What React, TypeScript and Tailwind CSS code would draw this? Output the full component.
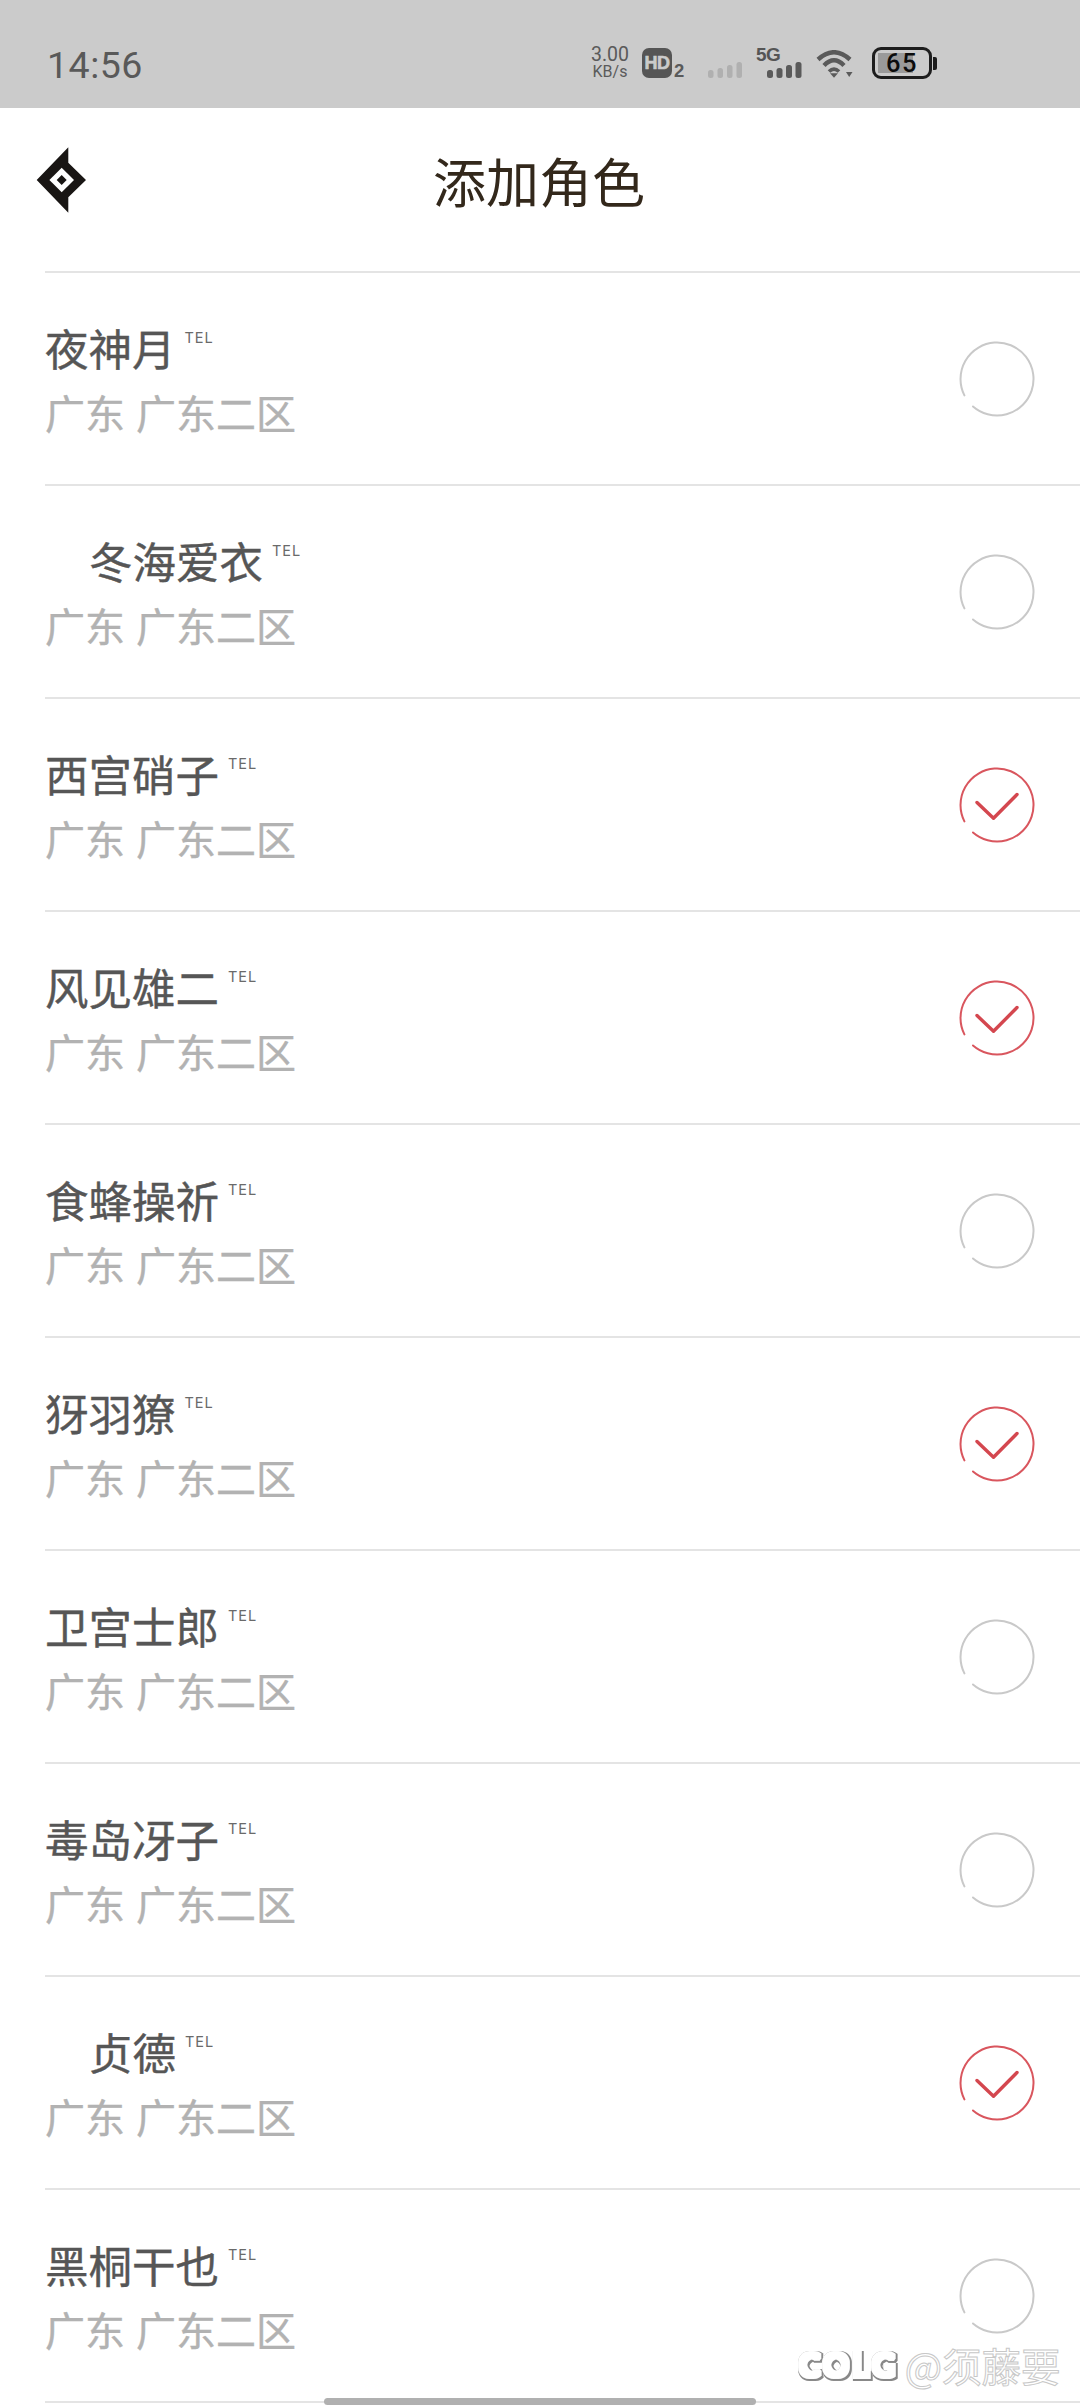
const rows = [
  { name: "夜神月", checked: false, indent: false },
  { name: "冬海爱衣", checked: false, indent: true },
  { name: "西宫硝子", checked: true, indent: false },
  { name: "风见雄二", checked: true, indent: false },
  { name: "食蜂操祈", checked: false, indent: false },
  { name: "犽羽獠", checked: true, indent: false },
  { name: "卫宫士郎", checked: false, indent: false },
  { name: "毒岛冴子", checked: false, indent: false },
  { name: "贞德", checked: true, indent: true },
  { name: "黑桐干也", checked: false, indent: false },
];

const cjk = "font-['Noto_Sans_CJK_SC','Noto_Sans',sans-serif]";

function Circle({ checked }: { checked: boolean }) {
  const c = checked ? "#d9565e" : "#c9c9c9";
  return (
    <svg width="80" height="80" viewBox="-40 -40 80 80" fill="none" className="shrink-0">
      <path d="M-32.6 16.4A36.5 36.5 0 1 1 -24 27.5" stroke={c} strokeWidth="2" strokeLinecap="round" />
      {checked && (
        <path d="M-20 -2.5L-3.5 13.3L20 -10.5" stroke="#d4474f" strokeWidth="3.4" strokeLinecap="round" strokeLinejoin="round" />
      )}
    </svg>
  );
}

function Row({ name, checked, indent }: { name: string; checked: boolean; indent: boolean }) {
  return (
    <div className="h-[213px] ml-[45px] border-b-2 border-[#e4e4e4] flex items-center justify-between pr-[43px] box-border">
      <div className="flex flex-col pb-[1px]">
        <div className={`flex items-start h-[60px] ${indent ? "pl-[44px]" : ""}`}>
          <span className={`${cjk} text-[43.5px] leading-[60px] text-[#565656] [-webkit-text-stroke:0.4px_#565656]`}>{name}</span>
          <span className="font-['Inter',sans-serif] text-[14.5px] leading-[14px] tracking-[1px] text-[#6a6a6a] ml-[9px] mt-[13px]">TEL</span>
        </div>
        <div className={`${cjk} text-[40px] leading-[52px] mt-[8px] text-[#b2b2b2] [word-spacing:2px] [-webkit-text-stroke:0.4px_#b2b2b2]`}>广东 广东二区</div>
      </div>
      <Circle checked={checked} />
    </div>
  );
}

function Bars({ color, barWidth }: { color: string; barWidth: number }) {
  return (
    <svg width="36" height="16" viewBox="0 0 36 16" fill={color} className="block">
      <rect x="0" y="8" width={barWidth} height="8" rx="2.5" />
      <rect x="9.5" y="6" width={barWidth} height="10" rx="2.5" />
      <rect x="19" y="3" width={barWidth} height="13" rx="2.5" />
      <rect x="28.5" y="0" width={barWidth} height="16" rx="2.5" />
    </svg>
  );
}

function StatusBar() {
  return (
    <div className="h-[108px] bg-[#cbcbcb] flex items-start justify-between pl-[47px] pr-[143px] shrink-0">
      <span className="font-['Roboto',sans-serif] text-[37.5px] leading-[44px] mt-[43px] tracking-[0.5px] text-[#595959]">14:56</span>
      <div className="flex items-start text-[#5a5a5a] mt-[46px]">
        <div className="flex flex-col items-center font-['Roboto',sans-serif] w-[38px]">
          <span className="text-[19.5px] leading-[18px]">3.00</span>
          <span className="text-[16px] leading-[16px]">KB/s</span>
        </div>
        <div className="ml-[13px] w-[30px] h-[30px] mt-[2px] rounded-[7px] bg-[#555555] flex items-center justify-center font-['Liberation_Sans',sans-serif] font-bold text-[18px] tracking-[-0.5px] text-[#cbcbcb] [-webkit-text-stroke:0.6px_#cbcbcb]">HD</div>
        <span className="font-['Liberation_Sans',sans-serif] font-bold text-[18.5px] leading-[14px] mt-[18px] ml-[2px] w-[11px]">2</span>
        <div className="ml-[23px] mt-[16px]">
          <Bars color="#b0b0b0" barWidth={5.5} />
        </div>
        <div className="ml-[12px] mt-[1px] flex flex-col items-end w-[47px]">
          <span className="self-start h-[15px] font-['Liberation_Sans',sans-serif] font-bold text-[19px] leading-[15px] tracking-[-0.5px] text-[#555555]">5G</span>
          <Bars color="#5a5a5a" barWidth={6} />
        </div>
        <svg className="ml-[13px] mt-[4px]" width="38" height="28" viewBox="0 0 38 28" fill="none" stroke="#5a5a5a" strokeWidth="4.4">
          <path d="M2 9.5Q18 -5 34 9.5" />
          <path d="M8 15.5Q18 5 28 15.5" />
          <path d="M13 21.5Q18 16.5 23 21.5" strokeWidth="3.6" />
          <path d="M14 23.2H22L18 27.8Z" fill="#5a5a5a" stroke="none" />
          <path d="M30 22H36.5L33.2 27Z" fill="#5a5a5a" stroke="none" />
        </svg>
        <div className="ml-[18px] mt-[1px] flex items-center">
          <div className="relative w-[60px] h-[32px] border-[3px] border-[#1d1d1d] rounded-[9px] flex items-center justify-center overflow-hidden">
            <div className="absolute left-[3px] top-[3px] bottom-[3px] w-[35px] bg-[#9a9a9a]" />
            <span className="relative font-['Roboto',sans-serif] font-medium text-[25.5px] leading-[26px] tracking-[1.5px] text-[#0c0c0c]">65</span>
          </div>
          <div className="w-[4px] h-[13px] ml-[1px] rounded-r-[2px] bg-[#1d1d1d]" />
        </div>
      </div>
    </div>
  );
}

function Header() {
  return (
    <div className="relative h-[163px] flex items-center justify-center shrink-0">
      <svg className="absolute left-[36px] top-[39px]" width="52" height="66" viewBox="36 147 52 66">
        <path d="M68.3 147.3V162.7L86 180L68.3 197.3V212.7L36.7 180Z" fill="#191614" />
        <path d="M61.7 167.7L74 180L61.7 192.3L49.4 180Z" fill="#ffffff" />
        <path d="M61.7 175L66.7 180L61.7 185L56.7 180Z" fill="#191614" />
      </svg>
      <span className={`${cjk} text-[53px] leading-[70px] text-[#33281b] -mt-[20px] -ml-[2px]`}>添加角色</span>
    </div>
  );
}

export default function App() {
  return (
    <div className="relative w-[1080px] h-[2408px] overflow-hidden bg-white flex flex-col">
      <svg className="absolute w-0 h-0">
        <defs>
          <filter id="bubble" x="-20%" y="-30%" width="140%" height="160%">
            <feMorphology in="SourceAlpha" operator="dilate" radius="2" result="outer" />
            <feFlood floodColor="#ffffff" result="white" />
            <feComposite in="white" in2="outer" operator="in" result="whiteBlob" />
            <feMorphology in="SourceAlpha" operator="dilate" radius="3" result="edge" />
            <feOffset in="edge" dx="0.5" dy="1.2" result="edgeOffset" />
            <feGaussianBlur in="edgeOffset" stdDeviation="0.7" result="edgeBlur" />
            <feFlood floodColor="#888888" result="gray" />
            <feComposite in="gray" in2="edgeBlur" operator="in" result="grayEdge" />
            <feMerge>
              <feMergeNode in="grayEdge" />
              <feMergeNode in="whiteBlob" />
            </feMerge>
          </filter>
        </defs>
      </svg>
      <StatusBar />
      <Header />
      <div className="ml-[45px] h-[2px] bg-[#e4e4e4] shrink-0" />
      <div>
        {rows.map((r) => (
          <Row key={r.name} {...r} />
        ))}
      </div>
      <div className="absolute left-[324px] top-[2398px] w-[432px] h-[7px] rounded-full bg-[#b0b0b0]" />
      <div className="absolute left-[799px] top-[2337px] flex items-center h-[56px]">
        <span className="font-['Lato',sans-serif] font-black text-[32px] leading-[56px] tracking-[3.5px] text-white [filter:url(#bubble)]">COLG</span>
        <span className={`${cjk} ml-[6px] text-[39.5px] leading-[56px] text-white [-webkit-text-stroke:1px_#c8c8c8]`}>@须藤要</span>
      </div>
    </div>
  );
}
